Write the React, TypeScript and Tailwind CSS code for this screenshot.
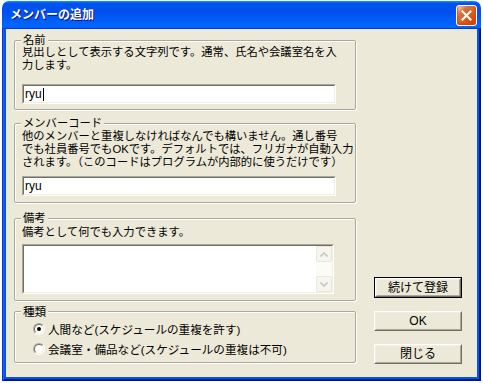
import React from 'react';

const Group: React.FC<{ label: string; className?: string; children?: React.ReactNode }> = ({ label, className = '', children }) => (
  <div className={`relative border border-[#aca899] rounded-[2px] shadow-[inset_1px_1px_0_#fff,1px_1px_0_#fff] ${className}`}>
    <span className="absolute left-[6px] -top-[7px] bg-[#ece9d8] px-[2px] leading-[13px] whitespace-nowrap">{label}</span>
    {children}
  </div>
);

const Sunken: React.FC<{ className?: string; children?: React.ReactNode }> = ({ className = '', children }) => (
  <div className={`border border-t-[#aca899] border-l-[#aca899] border-b-white border-r-white ${className}`}>
    <div className="h-full border border-t-[#716f64] border-l-[#716f64] border-b-[#f1efe2] border-r-[#f1efe2] bg-white">
      {children}
    </div>
  </div>
);

const Radio: React.FC<{ checked?: boolean }> = ({ checked }) => (
  <div className="w-[12px] h-[12px] shrink-0 rounded-full border border-t-[#aca899] border-l-[#aca899] border-b-white border-r-white">
    <div className="w-full h-full rounded-full border border-t-[#716f64] border-l-[#716f64] border-b-[#f1efe2] border-r-[#f1efe2] bg-white flex items-center justify-center">
      {checked && <div className="w-[4px] h-[4px] rounded-full bg-black" />}
    </div>
  </div>
);

const Button: React.FC<{ label: string; isDefault?: boolean; className?: string }> = ({ label, isDefault, className = '' }) => (
  <div className={`${isDefault ? 'border border-black' : ''} ${className}`}>
    <div className="h-full border border-t-white border-l-white border-b-[#716f64] border-r-[#716f64]">
      <div className="h-full border border-t-[#f1efe2] border-l-[#f1efe2] border-b-[#aca899] border-r-[#aca899] bg-[#ece9d8] flex items-center justify-center text-[12px] leading-none">
        {label}
      </div>
    </div>
  </div>
);

const ScrollArrow: React.FC<{ up?: boolean }> = ({ up }) => (
  <div className="h-[16px] rounded-[2px] border border-[#e9e7dd] bg-[#f6f5ef] flex items-center justify-center">
    <svg width="8" height="5" viewBox="0 0 8 5">
      <path d={up ? 'M0.5 4.5 L4 1 L7.5 4.5' : 'M0.5 0.5 L4 4 L7.5 0.5'} fill="none" stroke="#c9c8be" strokeWidth="1.6" />
    </svg>
  </div>
);

export default function App() {
  return (
    <div className="w-[483px] h-[383px] bg-white overflow-hidden text-black font-['Liberation_Sans','Noto_Sans_CJK_JP',sans-serif]">
      <div className="ml-[2px] mt-[1px] w-[479px] h-[380px] flex flex-col rounded-t-[7px] overflow-hidden">
        {/* title bar */}
        <div className="h-[28px] shrink-0 flex items-center pl-[8px] pr-[4px] bg-[linear-gradient(180deg,#0997ff,#0053ee_8%,#0050ee_40%,#06f_88%,#06f_93%,#005bff_95%,#003dd7_96%,#003dd7)]">
          <span className="text-[12px] font-bold text-white leading-none [text-shadow:1px_1px_#0f1089]">メンバーの追加</span>
          <div className="ml-auto w-[21px] h-[21px] rounded-[3px] border border-white bg-[radial-gradient(circle_at_90%_90%,#cc4600_0,#dc6527_55%,#cd7546_70%,#ffccb2_90%,#fff_100%)] shadow-[inset_0_-1px_2px_1px_#da4600] flex items-center justify-center">
            <svg width="11" height="11" viewBox="0 0 11 11">
              <path d="M1.5 1.5 L9.5 9.5 M9.5 1.5 L1.5 9.5" stroke="#fff" strokeWidth="2" strokeLinecap="square" />
            </svg>
          </div>
        </div>

        {/* frame */}
        <div className="flex-1 flex px-[4px] pb-[4px] bg-[#0855dd] shadow-[inset_1px_0_0_#0831d9,inset_-1px_-1px_0_#00138c,inset_2px_0_0_#166aee,inset_-2px_-2px_0_#001ea0]">
          <div className="flex-1 flex bg-[#ece9d8] pl-[8px] pt-[11px] text-[11.3px] leading-[13px]">
            <div className="w-[342px] flex flex-col">
              <Group label="名前" className="h-[70px] pl-[7px] pt-[5px]">
                <div className="whitespace-nowrap">見出しとして表示する文字列です。通常、氏名や会議室名を入</div>
                <div className="whitespace-nowrap">力します。</div>
                <Sunken className="mt-[12px] w-[314px] h-[20px]">
                  <div className="flex items-center h-full pl-[1px] text-[12px] leading-none">
                    ryu<span className="ml-[1px] w-[1px] h-[13px] bg-black" />
                  </div>
                </Sunken>
              </Group>

              <Group label="メンバーコード" className="mt-[13px] h-[80px] pl-[7px] pt-[6px]">
                <div className="whitespace-nowrap">他のメンバーと重複しなければなんでも構いません。通し番号</div>
                <div className="whitespace-nowrap">でも社員番号でもOKです。デフォルトでは、フリガナが自動入力</div>
                <div className="whitespace-nowrap">されます。（このコードはプログラムが内部的に使うだけです）</div>
                <Sunken className="mt-[7px] w-[314px] h-[20px]">
                  <div className="flex items-center h-full pl-[1px] text-[12px] leading-none">ryu</div>
                </Sunken>
              </Group>

              <Group label="備考" className="mt-[15px] h-[83px] pl-[7px] pt-[7px]">
                <div className="whitespace-nowrap">備考として何でも入力できます。</div>
                <Sunken className="mt-[5px] w-[312px] h-[50px]">
                  <div className="h-full flex justify-end">
                    <div className="w-[16px] h-full flex flex-col bg-[#fbfbf8]">
                      <ScrollArrow up />
                      <div className="flex-1" />
                      <ScrollArrow />
                    </div>
                  </div>
                </Sunken>
              </Group>

              <Group label="種類" className="mt-[10px] h-[52px] pl-[18px] pt-[7px] text-[11.6px]">
                <div className="h-[20px] flex items-center gap-[3px] whitespace-nowrap">
                  <Radio checked />
                  <span>人間など(スケジュールの重複を許す)</span>
                </div>
                <div className="h-[20px] flex items-center gap-[3px] whitespace-nowrap">
                  <Radio />
                  <span>会議室・備品など(スケジュールの重複は不可)</span>
                </div>
              </Group>
            </div>

            <div className="ml-[18px] w-[88px] flex flex-col">
              <Button label="続けて登録" isDefault className="mt-[237px] h-[21px]" />
              <Button label="OK" className="mt-[13px] h-[20px]" />
              <Button label="閉じる" className="mt-[13px] h-[20px]" />
            </div>
          </div>
        </div>
      </div>
    </div>
  );
}
